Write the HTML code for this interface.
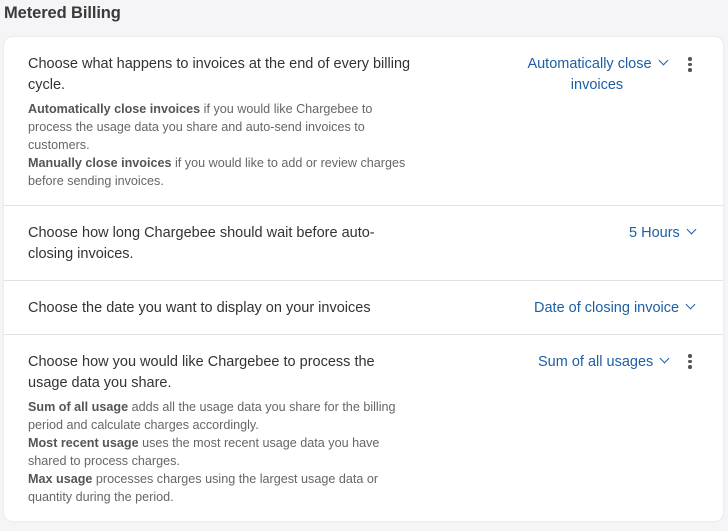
<!DOCTYPE html>
<html><head><style>
body{margin:0;width:728px;height:531px;background:#f5f5f7;font-family:"Liberation Sans",sans-serif;overflow:hidden;position:relative}
h1{position:absolute;left:4px;top:4px;margin:0;font-size:16.5px;font-weight:bold;color:#3a3a3a;letter-spacing:-0.1px}
.card{position:absolute;left:4px;top:37px;width:719px;height:484px;background:#fff;border-radius:8px;box-shadow:0 0 2px rgba(0,0,0,.12)}
.row{position:absolute;left:0;width:719px;border-bottom:1px solid #e2e2e6}
.t{position:absolute;left:24px;width:410px;font-size:14.5px;line-height:21px;color:#333}
.s{font-size:12.6px;line-height:18px;color:#666;margin-top:4px}
.s b{color:#555}
.a{position:absolute;font-size:14.5px;line-height:21px;color:#1d5fa6;text-align:center}
.chev{display:inline-block;width:6px;height:6px;border-right:1.8px solid #1d5fa6;border-bottom:1.8px solid #1d5fa6;transform:rotate(45deg);margin-left:8px;position:relative;top:-4px}
.dots{position:absolute;width:3px}
.dots i{display:block;width:3.5px;height:3.5px;border-radius:50%;background:#555;margin-bottom:2px}
</style></head><body>
<h1>Metered Billing</h1>
<div class="card">
<div class="row" style="top:0;height:168px">
 <div class="t" style="top:17px">Choose what happens to invoices at the end of every billing cycle.
 <div class="s" style="width:390px"><b>Automatically close invoices</b> if you would like Chargebee to process the usage data you share and auto-send invoices to customers.<br><b>Manually close invoices</b> if you would like to add or review charges before sending invoices.</div></div>
 <div class="a" style="left:518px;top:17px;width:150px">Automatically close<span class="chev"></span><br>invoices</div>
 <div class="dots" style="left:684px;top:20px"><i></i><i></i><i></i></div>
</div>
<div class="row" style="top:168px;height:75px">
 <div class="t" style="top:18px;width:380px">Choose how long Chargebee should wait before auto-closing invoices.</div>
 <div class="a" style="left:625px;top:18px">5 Hours<span class="chev"></span></div>
</div>
<div class="row" style="top:243px;height:54px">
 <div class="t" style="top:18px">Choose the date you want to display on your invoices</div>
 <div class="a" style="left:530px;top:18px">Date of closing invoice<span class="chev"></span></div>
</div>
<div class="row" style="top:297px;height:187px;border:none">
 <div class="t" style="top:18px;width:385px">Choose how you would like Chargebee to process the usage data you share.
 <div class="s"><b>Sum of all usage</b> adds all the usage data you share for the billing period and calculate charges accordingly.<br><b>Most recent usage</b> uses the most recent usage data you have shared to process charges.<br><b>Max usage</b> processes charges using the largest usage data or quantity during the period.</div></div>
 <div class="a" style="left:534px;top:18px">Sum of all usages<span class="chev"></span></div>
 <div class="dots" style="left:684px;top:20px"><i></i><i></i><i></i></div>
</div>
</div>
</body></html>
